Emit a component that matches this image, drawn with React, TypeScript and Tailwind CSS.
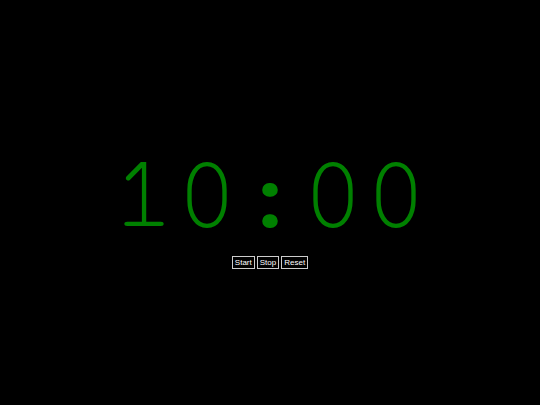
export default function App() {
  return (
    <div className="w-[540px] h-[405px] bg-black flex flex-col items-center justify-center pt-[6px]">
      <div className="text-[#008000] text-[105px] leading-none font-['FreeMono',monospace]">10:00</div>
      <div className="flex gap-[2px] mt-[9px] font-['Liberation_Sans',Arial,sans-serif]">
        <button className="bg-black text-white text-[8px] border border-[#cccccc] px-[2px] leading-[11px]">Start</button>
        <button className="bg-black text-white text-[8px] border border-[#cccccc] px-[2px] leading-[11px]">Stop</button>
        <button className="bg-black text-white text-[8px] border border-[#cccccc] px-[2px] leading-[11px]">Reset</button>
      </div>
    </div>
  );
}
